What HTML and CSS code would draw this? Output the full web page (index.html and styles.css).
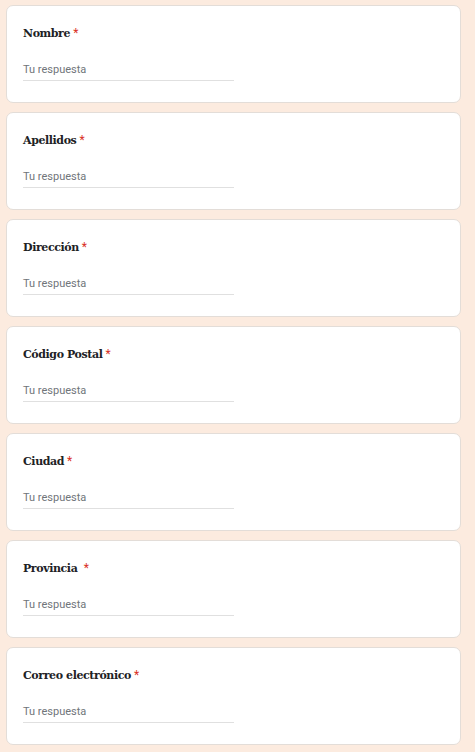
FILE: index.html
```html
<!DOCTYPE html>
<html lang="es">

<head>
    <meta charset="UTF-8">
    <meta name="viewport" content="width=device-width, initial-scale=1.0">
    <title>Formulario</title>
    <link rel="stylesheet" href="styles.css">
</head>

<body>
    <main class="form_wrap">
        <div class="card">
            <p class="q_title">Nombre<span class="req">*</span></p>
            <div class="answer">Tu respuesta</div>
        </div>
        <div class="card">
            <p class="q_title">Apellidos<span class="req">*</span></p>
            <div class="answer">Tu respuesta</div>
        </div>
        <div class="card">
            <p class="q_title">Dirección<span class="req">*</span></p>
            <div class="answer">Tu respuesta</div>
        </div>
        <div class="card">
            <p class="q_title">Código Postal<span class="req">*</span></p>
            <div class="answer">Tu respuesta</div>
        </div>
        <div class="card">
            <p class="q_title">Ciudad<span class="req">*</span></p>
            <div class="answer">Tu respuesta</div>
        </div>
        <div class="card">
            <p class="q_title">Provincia <span class="req">*</span></p>
            <div class="answer">Tu respuesta</div>
        </div>
        <div class="card">
            <p class="q_title">Correo electrónico<span class="req">*</span></p>
            <div class="answer">Tu respuesta</div>
        </div>
    </main><!-- .form_wrap end -->
</body>

</html>
```

FILE: styles.css
```css
* {
    margin: 0;
    padding: 0;
    box-sizing: border-box;
}

body {
    background-color: #fcebdf;
    font-family: Roboto, "Liberation Sans", sans-serif;
}

.form_wrap {
    width: 455px;
    margin: 5px 0 0 6px;
    display: flex;
    flex-direction: column;
    gap: 9px;
}

.card {
    height: 98px;
    background-color: #fff;
    border: 1px solid #e3ddd8;
    border-radius: 7px;
    padding: 19px 16px 0;
}

.q_title {
    font-family: "DejaVu Serif", "Liberation Serif", serif;
    font-weight: bold;
    font-size: 11px;
    line-height: 16px;
    color: #202124;
    letter-spacing: -0.4px;
}

.q_title .req {
    color: #d93025;
    font-family: Roboto, sans-serif;
    font-weight: normal;
    font-size: 12px;
    margin-left: 3px;
}

.answer {
    width: 211px;
    margin-top: 20px;
    padding-bottom: 3px;
    font-size: 11px;
    line-height: 15px;
    color: #70757a;
    border-bottom: 1px solid #e0e0e0;
}
```
